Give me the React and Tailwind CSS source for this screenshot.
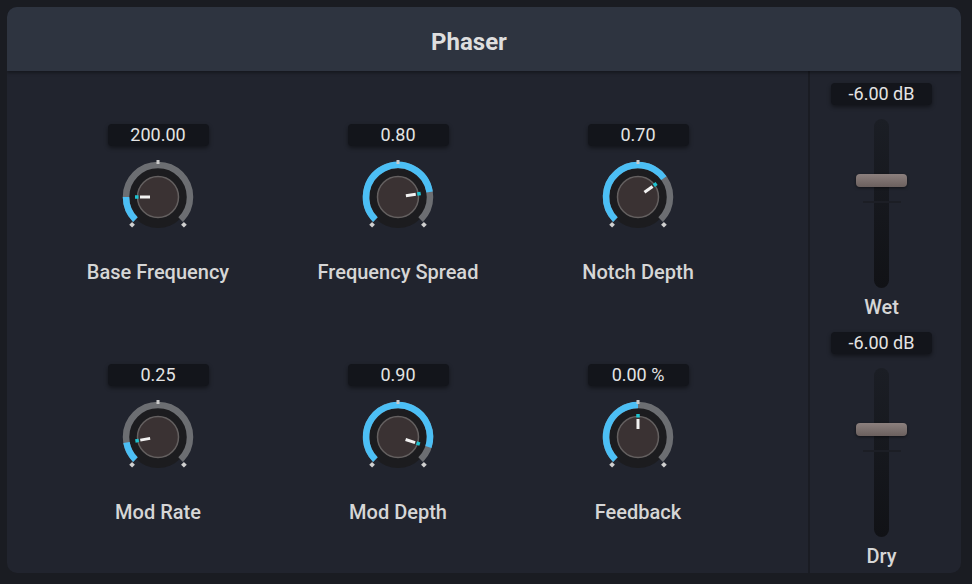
import React from 'react';

const knobs = [
  { label: 'Base Frequency', value: '200.00', angle: -90 },
  { label: 'Frequency Spread', value: '0.80', angle: 81 },
  { label: 'Notch Depth', value: '0.70', angle: 54 },
  { label: 'Mod Rate', value: '0.25', angle: -100 },
  { label: 'Mod Depth', value: '0.90', angle: 108 },
  { label: 'Feedback', value: '0.00 %', angle: 0 },
];

const pt = (a, r) => {
  const rad = (a * Math.PI) / 180;
  return [40 + r * Math.sin(rad), 40 - r * Math.cos(rad)];
};

const arc = (a0, a1, r) => {
  const [x0, y0] = pt(a0, r);
  const [x1, y1] = pt(a1, r);
  const large = a1 - a0 > 180 ? 1 : 0;
  return `M ${x0} ${y0} A ${r} ${r} 0 ${large} 1 ${x1} ${y1}`;
};

function ValueBox({ children }) {
  return (
    <div className="w-[101px] h-[22px] rounded-[4px] bg-[#13151b] shadow-[0_2px_4px_rgba(0,0,0,0.45)] flex items-center justify-center text-[18px] text-[#e4e4e4] leading-none">
      {children}
    </div>
  );
}

function Knob({ angle }) {
  const [p1x, p1y] = pt(angle, 8);
  const [p2x, p2y] = pt(angle, 18);
  const [c1x, c1y] = pt(angle, 19.5);
  const [c2x, c2y] = pt(angle, 23);
  const [lx, ly] = pt(-137, 38);
  const [rx, ry] = pt(137, 38);
  return (
    <svg width="80" height="80" viewBox="0 0 80 80">
      <circle cx="40" cy="40" r="31" fill="#1c1c1f" />
      <path d={arc(-135, 135, 32)} stroke="#6c6e72" strokeWidth="6.5" fill="none" />
      <path d={arc(-135, angle, 32)} stroke="#4cbff5" strokeWidth="6.5" fill="none" />
      <circle cx="40" cy="40" r="20.5" fill="#3a3233" stroke="#646060" strokeWidth="1.5" />
      <rect x="38.5" y="3" width="3" height="4" fill="#c9c9c9" />
      <rect x={lx - 2} y={ly - 2} width="4" height="4" fill="#d0d0d0" transform={`rotate(45 ${lx} ${ly})`} />
      <rect x={rx - 2} y={ry - 2} width="4" height="4" fill="#d0d0d0" transform={`rotate(45 ${rx} ${ry})`} />
      <line x1={p1x} y1={p1y} x2={p2x} y2={p2y} stroke="#f2f2f2" strokeWidth="3" />
      <line x1={c1x} y1={c1y} x2={c2x} y2={c2y} stroke="#1ec3d0" strokeWidth="3.5" />
    </svg>
  );
}

function Fader({ value, label }) {
  return (
    <div className="flex flex-col items-center">
      <ValueBox>{value}</ValueBox>
      <div className="relative mt-[14px] w-[15px] h-[169px] rounded-full bg-gradient-to-b from-[#1b1e25] to-[#111216]">
        <div className="absolute left-[-11px] top-[82px] w-[38px] h-[2px] bg-[#1c1e25]" />
        <div className="absolute left-[-18px] top-[55px] w-[51px] h-[13px] rounded-[4px] bg-gradient-to-b from-[#8c807e] to-[#6b605e] shadow-[0_1px_3px_rgba(0,0,0,0.5)]" />
      </div>
      <div className="mt-[7px] h-[24px] leading-[24px] text-[20px] font-medium text-[#d6d6d6]">{label}</div>
    </div>
  );
}

export default function App() {
  return (
    <div className="w-[972px] h-[584px] bg-[#1a1c22] pt-[7px] pl-[7px] pr-[11px] pb-[11px] font-['Roboto',sans-serif]">
      <div className="w-full h-full rounded-[10px] bg-[#21242e] flex flex-col overflow-hidden">
        <div className="h-[64px] shrink-0 bg-[#2e3440] flex items-center justify-center pr-[30px] pt-[5px] shadow-[0_2px_3px_rgba(0,0,0,0.35)] z-10">
          <span className="text-[24px] font-bold text-[#dedede]">Phaser</span>
        </div>
        <div className="flex flex-1">
          <div className="w-[801px] pl-[31px] pt-[53px] grid grid-cols-[240px_240px_240px] auto-rows-[240px]">
            {knobs.map((k) => (
              <div key={k.label} className="flex flex-col items-center">
                <ValueBox>{k.value}</ValueBox>
                <div className="mt-[11px]">
                  <Knob angle={k.angle} />
                </div>
                <div className="mt-[23px] h-[24px] leading-[24px] text-[20px] font-medium text-[#d6d6d6]">{k.label}</div>
              </div>
            ))}
          </div>
          <div className="flex-1 border-l-2 border-[#1a1c23] pt-[12px] pr-[8px] flex flex-col items-center gap-[13px]">
            <Fader value="-6.00 dB" label="Wet" />
            <Fader value="-6.00 dB" label="Dry" />
          </div>
        </div>
      </div>
    </div>
  );
}
